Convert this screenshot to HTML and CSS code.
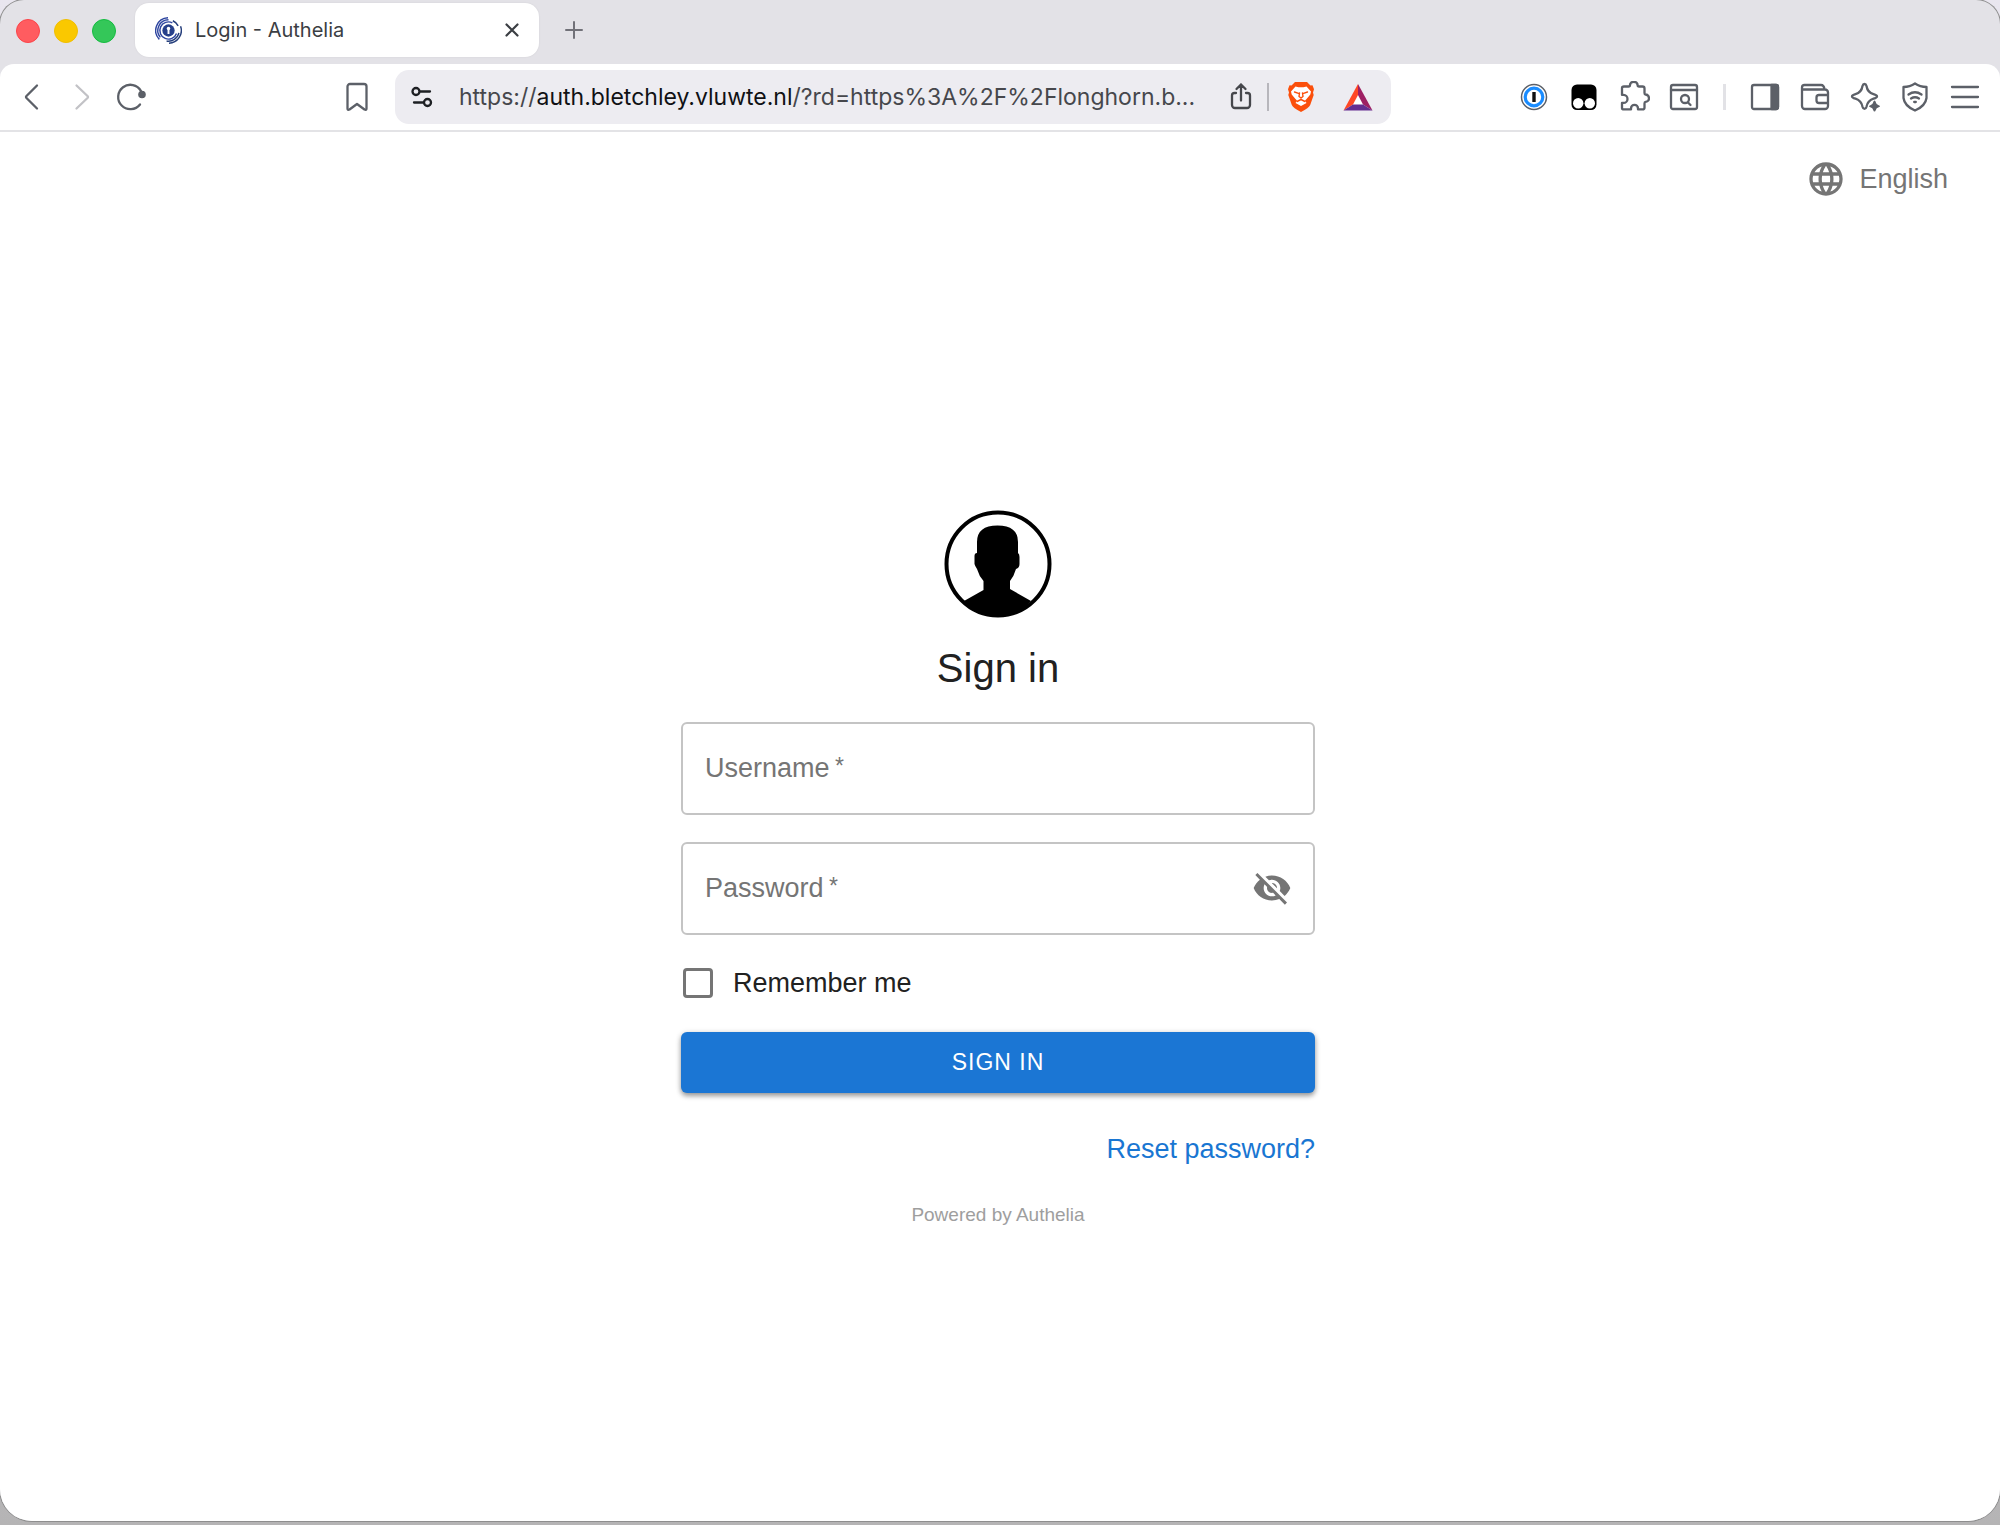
FILE: index.html
```html
<!DOCTYPE html>
<html lang="en">
<head>
<meta charset="utf-8">
<title>Login - Authelia</title>
<link rel="stylesheet" href="styles.css">
</head>
<body>
<div class="window">
  <header class="tabbar">
    <div class="lights">
      <button class="light light-red" aria-label="Close window"></button>
      <button class="light light-yellow" aria-label="Minimise window"></button>
      <button class="light light-green" aria-label="Zoom window"></button>
    </div>
    <div class="tab">
      <svg class="favicon" viewBox="0 0 28 28" fill="none" stroke="#2f46a0" stroke-width="1.500">
        <circle cx="14" cy="14" r="6.400" fill="#27408b" stroke="none"/>
        <circle cx="14" cy="11.800" r="1.800" fill="#fff" stroke="none"/>
        <path d="M14 12v5.500" stroke="#fff" stroke-width="2"/>
        <path d="M18 6.100A8.900 8.900 0 1 0 22.300 17" />
        <path d="M14 2.900A11.100 11.100 0 0 0 5.500 21.100"/>
        <path d="M13.500 .800A13.200 13.200 0 0 0 4.500 23.200"/>
        <path d="M18.500 3.900A11.100 11.100 0 0 1 24 9.200M24.800 16.500A11.100 11.100 0 0 1 12 24.900M26.500 9.500A13.200 13.200 0 0 1 14.500 27.200" stroke="#263f7c"/>
      </svg>
      <span class="tab-title">Login - Authelia</span>
      <button class="icon-btn tab-close" aria-label="Close tab"><svg width="14" height="14" viewBox="0 0 14 14" stroke="#3b3e43" stroke-width="2.200" stroke-linecap="round"><path d="M1.500 1.500l11 11M12.500 1.500l-11 11"/></svg></button>
    </div>
    <button class="icon-btn new-tab" aria-label="New tab"><svg width="18" height="18" viewBox="0 0 18 18" stroke="#717178" stroke-width="2" stroke-linecap="round"><path d="M9 1v16M1 9h16"/></svg></button>
  </header>

  <nav class="toolbar">
    <div class="nav-group">
      <button class="icon-btn" aria-label="Back"><svg viewBox="0 0 32 32"><path d="M21 4.500L10.500 15q-1 1 0 2L21 27.500"/></svg></button>
      <button class="icon-btn muted" aria-label="Forward"><svg viewBox="0 0 32 32"><path d="M10.500 4.500l11 10.500q1 1 0 2l-11 10.500"/></svg></button>
      <button class="icon-btn" aria-label="Reload"><svg viewBox="0 0 32 32"><path d="M24 23.500A12.200 12.200 0 1 1 25 10"/><circle cx="26" cy="13.500" r="3.800" fill="currentColor" stroke="none"/></svg></button>
    </div>
    <button class="icon-btn bookmark" aria-label="Bookmark"><svg viewBox="0 0 32 32"><path d="M9 3h14a2.500 2.500 0 0 1 2.500 2.500V27.500q0 2-2 1L16 23 8.500 28.500q-2 1-2-1V5.500A2.500 2.500 0 0 1 9 3z"/></svg></button>
    <div class="address">
      <button class="icon-btn site" aria-label="Site information"><svg width="22" height="22" viewBox="0 0 22 22"><circle cx="5" cy="5.500" r="3.500"/><path d="M9.500 5.500H19M3 16.500h9"/><circle cx="16.500" cy="16.500" r="3.500"/></svg></button>
      <span class="url">https://<span class="host">auth.bletchley.vluwte.nl</span>/?rd=https%3A%2F%2Flonghorn.b...</span>
      <button class="icon-btn share" aria-label="Share"><svg viewBox="0 0 32 32"><path d="M11 12H9.500A2.500 2.500 0 0 0 7 14.500V24a3 3 0 0 0 3 3h12a3 3 0 0 0 3-3V14.500A2.500 2.500 0 0 0 22.500 12H21M16 19.500V3.500M11.500 8L16 3.500 20.500 8"/></svg></button>
      <span class="address-rule"></span>
      <button class="icon-btn" aria-label="Brave Shields">
        <svg viewBox="0 0 32 32"><path fill="#fb4f0b" stroke="none" d="M10 1h12l3.500 3.500 2-.2 1.500 4-1 3.200.7 2.500-3.500 10Q24 27 16 31 8 27 6.800 24L3.300 14l.7-2.500L3 8.300l1.500-4 2 .2z"/><path fill="#fff" stroke="none" d="M10.500 5.500l3 .8h5l3-.8 4.500 5-.7 3-3.800 4.500-1.500 1.500 1.500 2.500L16 25 10.500 22l1.500-2.500L10.500 18l-3.800-4.500-.7-3z"/><path stroke="#fb4f0b" stroke-width="1.400" d="M9.500 11l4 1.300M22.500 11l-4 1.300M14.500 12L14 15.500l2 1.500 2-1.500-.5-3.500M12 20.500l4-2 4 2"/></svg>
      </button>
      <button class="icon-btn rewards" aria-label="Brave Rewards">
        <svg class="solid" viewBox="0 0 32 32"><path fill="#fff" d="M16 11l7 13H9z"/><path fill="#ff4724" d="M16 3v11L11 23.500 1.500 29.500z"/><path fill="#9e1f63" d="M16 3l14.500 26.500-9.500-6L16 14z"/><path fill="#662d91" d="M1.500 29.500L11 23.500h10l9.500 6z"/></svg>
      </button>
    </div>
    <div class="extensions">
      <button class="icon-btn" aria-label="1Password"><svg viewBox="0 0 32 32"><circle cx="16" cy="16" r="12.500" fill="#fff" stroke-width="1.500"/><circle cx="16" cy="16" r="8.800" stroke="#1a8cff" stroke-width="3.200"/><path stroke="#111" stroke-width="3.400" stroke-linecap="butt" d="M16 11v10"/></svg></button>
      <button class="icon-btn" aria-label="Tampermonkey"><svg class="solid" viewBox="0 0 32 32"><rect x="3.500" y="3.500" width="25" height="25.500" rx="5.500" fill="#000"/><circle cx="10.200" cy="22.200" r="5.200" fill="#fff"/><circle cx="21.800" cy="22.200" r="5.200" fill="#fff"/></svg></button>
      <button class="icon-btn" aria-label="Extensions"><svg viewBox="0 0 32 32"><path d="M6 5.500h4.500q1.500 0 1.500-1.500a3.800 3.200 0 0 1 7.600 0q0 1.500 1.500 1.500h3.400q2 0 2 2V12q0 1.500 1 1.500a3.500 3.700 0 0 1 0 7.400q-1 0-1 1.500v4q0 2-2 2h-4.500v-1a3.500 3.500 0 0 0-7 0v1H6q-2 0-2-1.500v-5h1.500a3.800 3.800 0 0 0 0-8H4V7q0-1.500 2-1.500z"/></svg></button>
      <button class="icon-btn" aria-label="Search tabs"><svg viewBox="0 0 32 32"><rect x="3" y="4" width="26" height="24" rx="2"/><path d="M3 9h26M20 21.500l2.500 2.500"/><circle cx="17" cy="18" r="4"/></svg></button>
      <span class="toolbar-rule"></span>
      <button class="icon-btn" aria-label="Side panel"><svg viewBox="0 0 32 32"><path d="M22.500 4H27a2 2 0 0 1 2 2v20a2 2 0 0 1-2 2h-4.500z" fill="currentColor"/><rect x="3" y="4" width="26" height="24" rx="2"/></svg></button>
      <button class="icon-btn" aria-label="Wallet"><svg viewBox="0 0 32 32"><path d="M3 8.500H26a3 3 0 0 1 3 3v13.500a3 3 0 0 1-3 3H6a3 3 0 0 1-3-3V6.500A2.500 2.500 0 0 1 5.500 4H22q3 0 3.500 4.500M29 14H20q-2.500 0-2.500 2.500V19.500q0 2.500 2.500 2.500h9"/></svg></button>
      <button class="icon-btn" aria-label="Leo AI"><svg viewBox="0 0 32 32"><path d="M15.500 3q1.500 0 2 2 1 6.500 7 8.200 3.500 1 3.500 2.200t-3.500 2.200q-6 2-7 8.200-.5 2-2 2t-2-2q-1-6.200-7-8.200Q3 16.600 3 15.400t3.500-2.200q6-1.700 7-8.200.5-2 2-2z"/><path fill="currentColor" stroke="none" d="M25.500 19.500q1 0 1.200 1.500.6 2.800 3 3.300 1.300.4 1.300 1t-1.300 1q-2.400.6-3 3-.3 1.200-1.200 1.200t-1.200-1.200q-.6-2.400-3-3-1.300-.4-1.300-1t1.300-1q2.400-.5 3-3.300.2-1.500 1.200-1.500z"/></svg></button>
      <button class="icon-btn" aria-label="VPN"><svg viewBox="0 0 32 32"><path d="M16 2.500q5 3.500 11.500 3.500v11Q26.500 25 16 29.500 5.500 25 4.500 17V6q6.500 0 11.500-3.500zM9.500 13.500q6.500-4.500 13 0M12 17.500q4-2.500 8 0M15.200 21h1.600"/></svg></button>
      <button class="icon-btn" aria-label="Menu"><svg viewBox="0 0 32 32"><path d="M3 6h26M3 16h26M3 26h26"/></svg></button>
    </div>
  </nav>

  <main class="page">
    <button class="language">
      <svg viewBox="0 0 24 24"><path d="M11.990 2C6.470 2 2 6.480 2 12s4.470 10 9.990 10C17.520 22 22 17.520 22 12S17.520 2 11.990 2m6.930 6h-2.950c-.32-1.250-.78-2.450-1.380-3.560 1.840.63 3.370 1.910 4.330 3.560M12 4.040c.83 1.200 1.480 2.530 1.910 3.960h-3.820c.43-1.430 1.080-2.760 1.910-3.960M4.260 14C4.100 13.360 4 12.690 4 12s.1-1.360.26-2h3.380c-.08.66-.14 1.320-.14 2s.06 1.340.14 2zm.82 2h2.950c.32 1.250.78 2.450 1.380 3.560-1.840-.63-3.370-1.900-4.330-3.560m2.950-8H5.080c.96-1.660 2.490-2.930 4.330-3.560C8.810 5.550 8.350 6.750 8.030 8M12 19.960c-.83-1.200-1.480-2.530-1.910-3.960h3.820c-.43 1.430-1.080 2.760-1.910 3.960M14.340 14H9.660c-.09-.66-.16-1.320-.16-2s.07-1.350.16-2h4.680c.09.65.16 1.320.16 2s-.07 1.340-.16 2m.25 5.560c.6-1.110 1.060-2.310 1.380-3.560h2.950c-.96 1.650-2.490 2.930-4.330 3.560M16.360 14c.08-.66.14-1.320.14-2s-.06-1.340-.14-2h3.380c.16.64.26 1.310.26 2s-.1 1.360-.26 2z"/></svg>
      <span>English</span>
    </button>

    <form class="login">
      <svg class="avatar" viewBox="0 0 108 108"><circle cx="54" cy="54" r="51.500" fill="#fff" stroke="#000" stroke-width="4"/><path d="M33 32Q33 15.500 53.500 15.500T74 32V43q1.500 1 1.500 4v7q0 4-3.500 5-2 7-6 12v8L87 91Q73 107 54 107T20 91L39.500 80V71Q35 66 33 59q-2-3-2.500-5V46q0-3 2.500-3z"/></svg>
      <h1>Sign in</h1>
      <div class="field">
        <input id="username" type="text" required placeholder=" ">
        <label for="username">Username&#8201;<span class="asterisk">*</span></label>
      </div>
      <div class="field">
        <input id="password" type="password" required placeholder=" ">
        <label for="password">Password&#8201;<span class="asterisk">*</span></label>
        <button type="button" class="reveal" aria-label="Show password"><svg viewBox="0 0 24 24"><path d="M12 7c2.760 0 5 2.240 5 5 0 .65-.13 1.260-.36 1.830l2.920 2.920c1.510-1.260 2.700-2.890 3.430-4.750-1.730-4.390-6-7.500-11-7.500-1.400 0-2.740.25-3.980.7l2.160 2.160C10.740 7.130 11.350 7 12 7M2 4.270l2.280 2.280.46.46C3.080 8.300 1.780 10.020 1 12c1.730 4.390 6 7.500 11 7.500 1.550 0 3.030-.3 4.380-.84l.42.42L19.730 22 21 20.730 3.270 3zM7.530 9.800l1.550 1.550c-.05.21-.08.43-.08.65 0 1.660 1.340 3 3 3 .22 0 .44-.03.65-.08l1.550 1.550c-.67.33-1.410.53-2.200.53-2.760 0-5-2.240-5-5 0-.79.2-1.530.53-2.200m4.310-.78 3.150 3.150.02-.16c0-1.660-1.340-3-3-3z"/></svg></button>
      </div>
      <label class="remember"><input type="checkbox"><span>Remember me</span></label>
      <button type="submit" class="submit">SIGN IN</button>
      <a class="reset" href="#reset">Reset password?</a>
      <a class="powered" href="#authelia">Powered by Authelia</a>
    </form>
  </main>
</div>
</body>
</html>
```
FILE: styles.css
```css
* { box-sizing: border-box; }

body {
  margin: 0;
  background: linear-gradient(#e9e6ef, #b5b4b5);
  font-family: "Liberation Sans", Arial, sans-serif;
  color: #212121;
}

button {
  margin: 0;
  padding: 0;
  border: 0;
  background: none;
  color: inherit;
  font: inherit;
}

.window {
  display: flex;
  flex-direction: column;
  min-height: calc(100vh - 4px);
  margin-bottom: 4px;
  overflow: hidden;
  border-radius: 24px 24px 32px 32px;
  background: #e3e2e7;
  box-shadow: 0 0 0 1px #8e8e8e;
}

/* Tab strip */
.tabbar {
  display: flex;
  align-items: center;
  height: 64px;
  padding: 0 17px 0 16px;
}

.lights { display: flex; gap: 14px; margin: -2px 19px 0 0; }
.light { width: 24px; height: 24px; border-radius: 50%; border: 1px solid; }
.light-red { background: #ff5c60; border-color: #fb4449; }
.light-yellow { background: #fac800; border-color: #f0be00; }
.light-green { background: #34c759; border-color: #14bb40; }

.tab {
  display: flex;
  align-items: center;
  width: 404px;
  height: 54px;
  margin-top: -4px;
  padding: 0 18px 0 20px;
  border-radius: 14px;
  background: #fff;
  box-shadow: 0 0 2px rgb(0 0 0 / 8%);
}
.favicon { width: 27px; height: 27px; margin-right: 13px; }
.tab-title { flex: 1; font: 20px/28px Inter, sans-serif; color: #3b3e43; }
.icon-btn { display: grid; place-items: center; flex: none; }
.icon-btn svg { display: block; fill: none; }
.tab-close { width: 18px; height: 18px; }
.new-tab { width: 18px; height: 18px; margin: -4px 0 0 26px; }

/* Toolbar */
.toolbar {
  display: flex;
  align-items: center;
  height: 68px;
  padding: 0 19px 0 16px;
  border-bottom: 2px solid #e3e3e6;
  border-radius: 14px 14px 0 0;
  background: #fff;
  color: #5c6068;
}
.toolbar svg {
  width: 32px;
  height: 32px;
  stroke: currentColor;
  stroke-width: 2.3;
  stroke-linecap: round;
  stroke-linejoin: round;
}
.toolbar .site svg { width: 22px; height: 22px; }
.toolbar .solid { stroke: none; }
.nav-group { display: flex; gap: 18px; margin-right: 193px; }
.muted { color: #c2c2c6; }
.bookmark { margin-right: 22px; }

.address {
  display: flex;
  align-items: center;
  width: 996px;
  height: 54px;
  padding: 0 17px 0 16px;
  border-radius: 14px;
  background: #edecf1;
}
.site { width: 22px; margin-right: 26px; color: #1d1f23; }
.url {
  flex: 1;
  overflow: hidden;
  white-space: nowrap;
  font: 23px/32px Inter, sans-serif;
  color: #46474c;
}
.host { color: #101114; }
.share { color: #46474c; }
.address-rule { width: 2px; height: 28px; margin: 0 16px 0 10px; background: #b7b6bc; }
.rewards { margin-left: 25px; }

.extensions { display: flex; align-items: center; gap: 18px; margin-left: auto; }
.toolbar-rule { width: 3px; height: 26px; margin: 0 5px; background: #e2e2e6; }

/* Login page */
.page {
  display: flex;
  flex: 1;
  flex-direction: column;
  align-items: center;
  padding: 23px 4px 0 0;
  background: #fff;
}
.language {
  display: flex;
  align-items: center;
  align-self: flex-end;
  gap: 13px;
  height: 48px;
  margin-right: 48px;
  font-size: 27px;
  line-height: 32px;
  color: #757575;
}
.language svg { width: 40px; height: 40px; fill: currentColor; }

.login {
  display: flex;
  flex-direction: column;
  align-items: center;
  width: 634px;
  max-width: 100%;
  margin: auto;
  padding-top: 12px;
}
.avatar { width: 108px; height: 108px; }
.login h1 {
  margin: 24px 0 28px;
  font-size: 40px;
  font-weight: 400;
  line-height: 52px;
}
.field {
  position: relative;
  width: 100%;
  height: 93px;
  margin-bottom: 27px;
}
.field input {
  width: 100%;
  height: 100%;
  padding: 0 24px;
  border: 2px solid #c4c4c4;
  border-radius: 6px;
  background: #fff;
  font: inherit;
  font-size: 27px;
}
.field label {
  position: absolute;
  top: 30px;
  left: 24px;
  font-size: 27px;
  line-height: 32px;
  color: #757575;
  pointer-events: none;
}
.asterisk { font-size: 23px; vertical-align: 3px; line-height: 1; }
.field input:not(:placeholder-shown) + label { display: none; }
.reveal { position: absolute; top: 26px; right: 23px; }
.reveal svg { display: block; width: 40px; height: 40px; fill: #757575; }

.remember {
  display: flex;
  align-items: center;
  align-self: flex-start;
  gap: 20px;
  height: 42px;
  margin-bottom: 28px;
  padding-left: 2px;
  font-size: 27px;
  line-height: 32px;
}
.remember input {
  appearance: none;
  width: 30px;
  height: 30px;
  margin: 0;
  border: 3px solid #757575;
  border-radius: 4px;
}
.remember input:checked { background: #1976d2; }

.submit {
  width: 100%;
  height: 61px;
  border-radius: 6px;
  background: #1b76d4;
  box-shadow: 0 3px 5px rgb(0 0 0 / 34%), 0 1px 6px rgb(0 0 0 / 14%);
  font-size: 23px;
  line-height: 32px;
  letter-spacing: 1px;
  color: #fff;
}
.reset {
  align-self: flex-end;
  margin: 40px 0 38px;
  font-size: 27px;
  line-height: 32px;
  text-decoration: none;
  color: #1976d2;
}
.powered {
  font-size: 19px;
  line-height: 24px;
  text-decoration: none;
  color: #9e9e9e;
}
```
